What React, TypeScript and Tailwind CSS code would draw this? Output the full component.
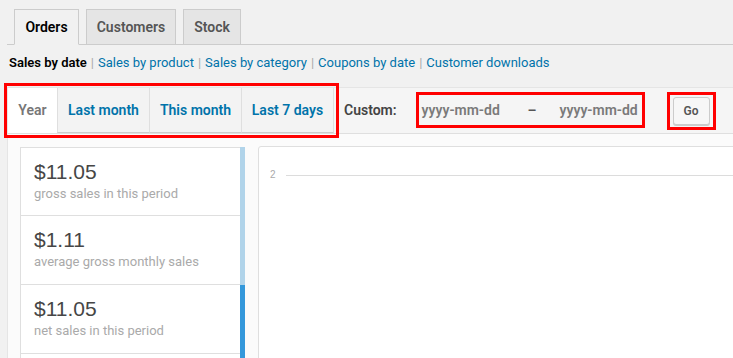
import React from "react";

const stats = [
  { amount: "$11.05", label: "gross sales in this period", bar: "bg-[#b1d4ea]" },
  { amount: "$1.11", label: "average gross monthly sales", bar: "bg-[#b1d4ea]" },
  { amount: "$11.05", label: "net sales in this period", bar: "bg-[#3498db]" },
  { amount: "", label: "", bar: "bg-[#3498db]" },
];

export default function App() {
  return (
    <div className="w-[733px] h-[358px] overflow-hidden bg-[#f1f1f1] font-['Roboto',sans-serif] text-[#444]">
      {/* top nav tabs */}
      <div className="ml-[7px] pl-[7px] pt-[9px] flex gap-[7px] border-b border-[#ccc]">
        <div className="-mb-px h-[36px] w-[65px] flex items-center justify-center border border-[#ccc] border-b-[#f1f1f1] bg-[#f1f1f1] text-[14px] font-semibold text-[#000]">
          Orders
        </div>
        <div className="h-[35px] w-[90px] flex items-center justify-center border border-b-0 border-[#ccc] bg-[#e5e5e5] text-[14px] font-semibold text-[#555]">
          Customers
        </div>
        <div className="h-[35px] w-[58px] flex items-center justify-center border border-b-0 border-[#ccc] bg-[#e5e5e5] text-[14px] font-semibold text-[#555]">
          Stock
        </div>
      </div>

      {/* sub nav */}
      <div className="mt-[8px] ml-[9px] flex items-center text-[13px] leading-[20px]">
        <span className="font-semibold text-[#000]">Sales by date</span>
        <span className="mx-[4px] text-[#aaa]">|</span>
        <span className="text-[#0073aa]">Sales by product</span>
        <span className="mx-[4px] text-[#aaa]">|</span>
        <span className="text-[#0073aa]">Sales by category</span>
        <span className="mx-[4px] text-[#aaa]">|</span>
        <span className="text-[#0073aa]">Coupons by date</span>
        <span className="mx-[4px] text-[#aaa]">|</span>
        <span className="text-[#0073aa]">Customer downloads</span>
      </div>

      {/* postbox */}
      <div className="mt-[14px] ml-[7px] mr-[-20px] border border-[#e5e5e5] bg-[#fbfbfb]">
        <div className="h-[46px] flex items-stretch bg-[#f5f5f5] border-b border-[#dfdfdf]">
          <div className="relative flex items-stretch">
            <div className="w-[49px] flex items-center justify-center bg-white text-[14px] font-semibold text-[#777]">
              Year
            </div>
            <div className="w-[92px] flex items-center justify-center bg-[#f3f3f3] border-l border-[#dfdfdf] border-b border-b-[#ccc] text-[14px] font-semibold text-[#0073aa]">
              Last month
            </div>
            <div className="w-[92px] flex items-center justify-center bg-[#f3f3f3] border-l border-[#dfdfdf] border-b border-b-[#ccc] text-[14px] font-semibold text-[#0073aa]">
              This month
            </div>
            <div className="w-[93px] flex items-center justify-center bg-[#f3f3f3] border-l border-r border-[#dfdfdf] border-b border-b-[#ccc] text-[14px] font-semibold text-[#0073aa]">
              Last 7 days
            </div>
            <div className="absolute -left-[4px] -top-[5px] -right-[5px] -bottom-[5px] border-[3px] border-[#ff0000]" />
          </div>

          <div className="ml-[10px] flex items-center text-[14px] font-semibold text-[#444]">Custom:</div>

          <div className="relative ml-[19px] mt-[4px] h-[36px] w-[229px] flex items-center text-[14px] font-semibold text-[#7a7a7a]">
            <span className="ml-[6px] w-[80px]">yyyy-mm-dd</span>
            <span className="ml-[26px] text-[#555]">–</span>
            <span className="ml-[23px]">yyyy-mm-dd</span>
            <div className="absolute inset-0 border-[3px] border-[#ff0000]" />
          </div>

          <div className="relative ml-[22px] mt-[4px] h-[38px] w-[49px] flex items-center justify-center">
            <div className="h-[28px] w-[37px] flex items-center justify-center rounded-[3px] border border-[#ccc] bg-[#f7f7f7] shadow-[0_1px_0_#ccc] text-[12px] font-semibold text-[#555]">
              Go
            </div>
            <div className="absolute inset-0 border-[3px] border-[#ff0000]" />
          </div>
        </div>

        <div className="pt-[13px] pl-[12px] flex gap-[13px] items-start">
          <div className="w-[225px] flex flex-col">
            {stats.map((s, i) => (
              <div key={i} className="flex">
                <div
                  className={
                    "w-[220px] h-[69px] bg-white border-l border-b border-[#dfdfdf] pt-[12px] pl-[13px] " +
                    (i === 0 ? "border-t" : "")
                  }
                >
                  {s.amount && (
                    <div className="font-['Liberation_Sans',Arial,sans-serif] text-[21px] leading-[24px] text-[#464646]">
                      {s.amount}
                    </div>
                  )}
                  {s.label && (
                    <div className="mt-[1px] text-[13px] leading-[18px] text-[#aaa]">{s.label}</div>
                  )}
                </div>
                <div className={"w-[5px] " + s.bar} />
              </div>
            ))}
          </div>

          <div className="flex-1 h-[260px] -mt-px bg-white border border-[#dfdfdf] rounded-tl-[3px]">
            <div className="mt-[22px] ml-[11px] flex items-center">
              <span className="text-[10px] leading-[12px] text-[#aaa] font-['Liberation_Sans',Arial,sans-serif]">2</span>
              <div className="ml-[10px] flex-1 h-px bg-[#dcdcdc]" />
            </div>
          </div>
        </div>
      </div>
    </div>
  );
}
